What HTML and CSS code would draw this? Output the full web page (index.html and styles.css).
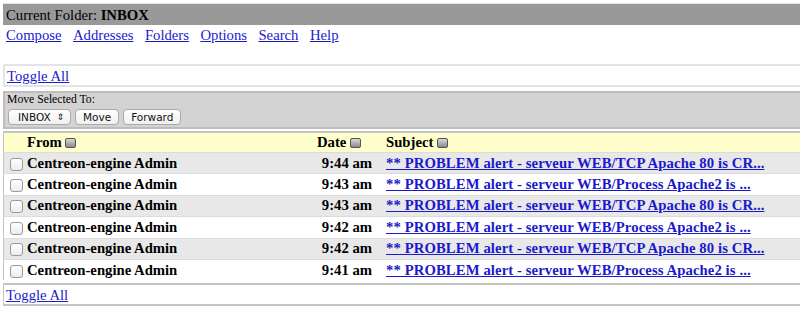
FILE: index.html
```html
<!DOCTYPE html>
<html lang="en">
<head>
  <meta charset="UTF-8" />
  <title>INBOX</title>
  <link rel="stylesheet" href="styles.css">
</head>
<body>
  <div class="page">
    <!-- Folder title -->
    <div class="folder-bar">Current Folder: <b>INBOX</b></div>

    <div class="menu">
      <a href="#">Compose</a>
      <a href="#">Addresses</a>
      <a href="#">Folders</a>
      <a href="#">Options</a>
      <a href="#">Search</a>
      <a href="#">Help</a>
    </div>

    <div class="toggle-row top"><a href="#">Toggle All</a></div>

    <!-- Move / forward controls -->
    <div class="move-box">
      <div class="move-label">Move Selected To:</div>
      <div class="move-controls">
        <span class="ctl select">INBOX <span class="arrows">&#8661;</span></span>
        <span class="ctl">Move</span>
        <span class="ctl">Forward</span>
      </div>
    </div>

    <table class="messages">
      <thead>
        <tr>
          <th class="col-check"></th>
          <th class="col-from">From <span class="sort"></span></th>
          <th class="col-date">Date <span class="sort"></span></th>
          <th class="col-subject">Subject <span class="sort"></span></th>
        </tr>
      </thead>
      <tbody>
        <tr class="alt">
          <td class="col-check"><span class="box"></span></td>
          <td class="col-from">Centreon-engine Admin</td>
          <td class="col-date">9:44 am</td>
          <td class="col-subject"><a href="#">** PROBLEM alert - serveur WEB/TCP Apache 80 is CR...</a></td>
        </tr>
        <tr>
          <td class="col-check"><span class="box"></span></td>
          <td class="col-from">Centreon-engine Admin</td>
          <td class="col-date">9:43 am</td>
          <td class="col-subject"><a href="#">** PROBLEM alert - serveur WEB/Process Apache2 is ...</a></td>
        </tr>
        <tr class="alt">
          <td class="col-check"><span class="box"></span></td>
          <td class="col-from">Centreon-engine Admin</td>
          <td class="col-date">9:43 am</td>
          <td class="col-subject"><a href="#">** PROBLEM alert - serveur WEB/TCP Apache 80 is CR...</a></td>
        </tr>
        <tr>
          <td class="col-check"><span class="box"></span></td>
          <td class="col-from">Centreon-engine Admin</td>
          <td class="col-date">9:42 am</td>
          <td class="col-subject"><a href="#">** PROBLEM alert - serveur WEB/Process Apache2 is ...</a></td>
        </tr>
        <tr class="alt">
          <td class="col-check"><span class="box"></span></td>
          <td class="col-from">Centreon-engine Admin</td>
          <td class="col-date">9:42 am</td>
          <td class="col-subject"><a href="#">** PROBLEM alert - serveur WEB/TCP Apache 80 is CR...</a></td>
        </tr>
        <tr>
          <td class="col-check"><span class="box"></span></td>
          <td class="col-from">Centreon-engine Admin</td>
          <td class="col-date">9:41 am</td>
          <td class="col-subject"><a href="#">** PROBLEM alert - serveur WEB/Process Apache2 is ...</a></td>
        </tr>
      </tbody>
    </table>

    <div class="toggle-row bottom"><a href="#">Toggle All</a></div>
  </div>
</body>
</html>
```

FILE: styles.css
```css
body {
  margin: 0;
  overflow: hidden;
  font-family: "Liberation Serif", "Times New Roman", serif;
  font-size: 14.7px;
  color: #000;
  background-color: #fff;
}

a {
  color: #1a1acc;
}

.page {
  width: 840px;
  margin: 3px 0 0 3px;
}

.folder-bar {
  background-color: #999999;
  border-top: 1px solid #e2e2e2;
  padding: 0 3px;
  height: 21px;
  line-height: 22px;
}

.menu {
  display: flex;
  gap: 11.5px;
  padding: 0 3px;
  height: 39px;
  line-height: 20px;
}

.toggle-row {
  border: 2px solid #e4e4e4;
  border-right: none;
  padding: 0 2px;
  height: 19px;
  line-height: 20px;
}

.toggle-row.bottom {
  margin-top: 3px;
  border-color: #c4c4c4;
  border-width: 2px 0 2px 1px;
}

/* Move box */
.move-box {
  margin-top: 4px;
  background-color: #d3d3d3;
  border: 2px solid #bdbdbd;
  border-right: none;
  padding: 0 2px;
  height: 34px;
}

.move-label {
  font-size: 11.7px;
  line-height: 14px;
}

.move-controls {
  display: flex;
  gap: 4px;
  margin-top: 2px;
  padding-left: 1px;
}

.ctl {
  display: inline-block;
  height: 14px;
  line-height: 14px;
  padding: 0 7px;
  font-family: "DejaVu Sans", sans-serif;
  font-size: 10.5px;
  color: #111;
  background: linear-gradient(#ffffff, #f0f0f0);
  border: 1px solid #a9a9a9;
  border-radius: 4px;
}

.ctl.select {
  width: 45px;
  padding-left: 9px;
  position: relative;
}

.ctl .arrows {
  position: absolute;
  right: 6px;
  top: 0;
  font-size: 9px;
}

/* Message list */
.messages {
  width: 100%;
  margin-top: 2px;
  border-collapse: collapse;
  border-top: 2px solid #c4c4c4;
  border-left: 1px solid #c4c4c4;
}

.messages th,
.messages td {
  padding: 0;
  height: 20.4px;
  white-space: nowrap;
  font-weight: bold;
  vertical-align: middle;
}

.messages thead tr {
  background-color: #ffffcc;
}

.messages th {
  text-align: left;
  height: 19px;
}

.messages tbody tr {
  border-top: 1px solid #dcdcdc;
}

.messages tbody tr.alt {
  background-color: #e8e8e8;
}

.col-check {
  width: 17px;
  padding-left: 6px !important;
}

.col-from {
  width: 275px;
}

.messages th.col-date {
  padding-left: 15px;
}

.messages td.col-date {
  text-align: right;
  padding-right: 14px;
  width: 70px;
}

.col-subject a {
  color: #1a1acc;
  letter-spacing: 0.1px;
}

.box {
  display: block;
  width: 11px;
  height: 11px;
  margin-top: 2px;
  border: 1px solid #9a9a9a;
  border-radius: 3px;
  background: linear-gradient(#ffffff, #ececec);
}

.sort {
  display: inline-block;
  width: 9px;
  height: 8px;
  border: 1px solid #555;
  border-radius: 2px;
  background: linear-gradient(#d8d8d8, #8a8a8a);
  vertical-align: -1px;
}
```
